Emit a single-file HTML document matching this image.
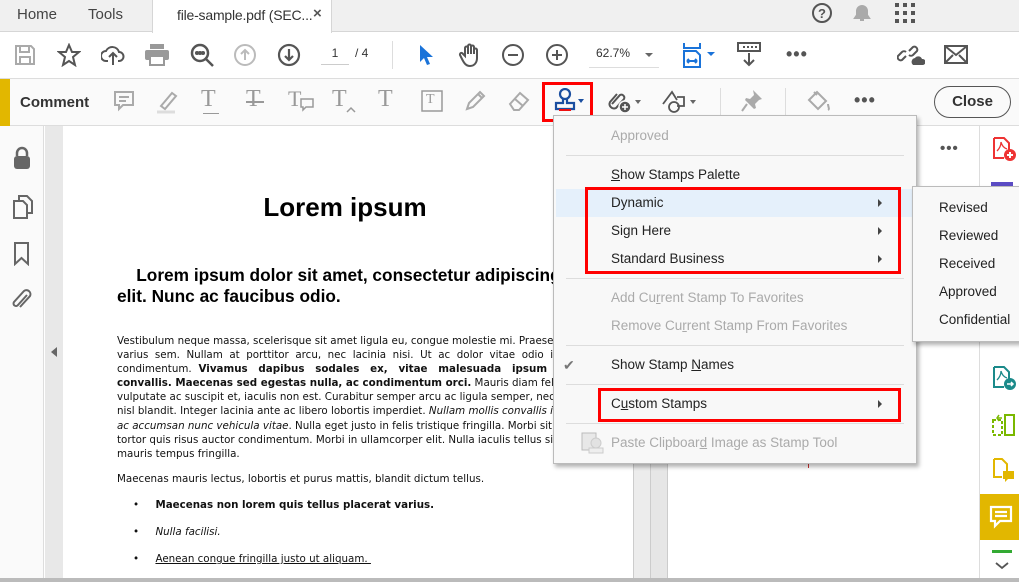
<!DOCTYPE html>
<html><head><meta charset="utf-8"><style>
*{margin:0;padding:0;box-sizing:border-box}
body{width:1019px;height:582px;overflow:hidden;background:#fff;font-family:"Liberation Sans",sans-serif;position:relative}
.a{position:absolute}
svg.i{position:absolute;fill:none;stroke:#555;stroke-width:2}
.mi{position:absolute;left:611px;font-size:13.5px;color:#222;font-family:"Liberation Sans",sans-serif}
.dis{color:#aaa}
.arr{position:absolute;left:878px;width:0;height:0;border-left:4px solid #444;border-top:4px solid transparent;border-bottom:4px solid transparent}
.sep{position:absolute;left:566px;width:338px;height:1px;background:#ddd}
.pt{font-family:"DejaVu Sans",sans-serif;font-size:10.3px;color:#111;line-height:14.1px}
</style></head><body>
<!-- tab bar -->
<div class="a" style="left:0;top:0;width:1019px;height:32px;background:#f0f0f0;border-bottom:1px solid #d6d6d6"></div>
<div class="a" style="left:17px;top:6px;font-size:15px;color:#444">Home</div>
<div class="a" style="left:88px;top:6px;font-size:15px;color:#444">Tools</div>
<div class="a" style="left:152px;top:0;width:180px;height:33px;background:#fff;border-left:1px solid #d6d6d6;border-right:1px solid #d6d6d6"></div>
<div class="a" style="left:177px;top:7px;font-size:14px;color:#333;letter-spacing:-0.2px">file-sample.pdf (SEC...</div>
<div class="a" style="left:313px;top:5px;font-size:15px;color:#555;font-weight:bold">×</div>
<svg class="i" style="left:811px;top:2px" width="22" height="22" viewBox="0 0 22 22"><circle cx="11" cy="11" r="9"/><text x="11" y="16" font-size="13" font-weight="bold" fill="#555" stroke="none" text-anchor="middle" font-family="Liberation Sans">?</text></svg>
<svg class="i" style="left:852px;top:2px" width="20" height="22" viewBox="0 0 20 22"><path d="M3 16h14l-2-3V9a5 5 0 0 0-10 0v4z M8 18h4" fill="#aaa" stroke="#aaa"/></svg>
<svg class="a" style="left:895px;top:3px" width="20" height="20"><g fill="#555"><rect x="0" y="0" width="4" height="4"/><rect x="8" y="0" width="4" height="4"/><rect x="16" y="0" width="4" height="4"/><rect x="0" y="8" width="4" height="4"/><rect x="8" y="8" width="4" height="4"/><rect x="16" y="8" width="4" height="4"/><rect x="0" y="16" width="4" height="4"/><rect x="8" y="16" width="4" height="4"/><rect x="16" y="16" width="4" height="4"/></g></svg>
<!-- toolbar 2 -->
<div class="a" style="left:0;top:78px;width:1019px;height:1px;background:#ddd"></div>
<svg class="i" style="left:14px;top:44px;stroke:#aaa" width="22" height="22"><path d="M2 2h15l3 3v15H2z M6 2v6h9V2 M6 20v-7h10v7"/></svg>
<svg class="i" style="left:57px;top:43px" width="24" height="24"><path d="M12 2l3 7h7l-6 5 2 8-6-4-6 4 2-8-6-5h7z"/></svg>
<svg class="i" style="left:101px;top:43px" width="24" height="24"><path d="M7 18H5a5 5 0 0 1 0-10 7 7 0 0 1 13 1 4.5 4.5 0 0 1 0 9h-1 M12 22V11 M8 14l4-4 4 4"/></svg>
<svg class="a" style="left:145px;top:44px" width="24" height="22"><rect x="5" y="0" width="14" height="5" fill="#999"/><rect x="0" y="6" width="24" height="10" rx="2" fill="#999"/><rect x="5" y="12" width="14" height="9" fill="#fff" stroke="#999" stroke-width="2"/></svg>
<svg class="i" style="left:190px;top:43px;stroke-width:2.5" width="26" height="26"><circle cx="10" cy="10" r="8"/><path d="M16 16l7 7"/><circle cx="7" cy="10" r=".8" fill="#555"/><circle cx="10" cy="10" r=".8" fill="#555"/><circle cx="13" cy="10" r=".8" fill="#555"/></svg>
<svg class="i" style="left:233px;top:43px;stroke:#bbb" width="24" height="24"><circle cx="12" cy="12" r="10"/><path d="M12 17V7 M8 11l4-4 4 4"/></svg>
<svg class="i" style="left:277px;top:43px;stroke-width:2.2" width="24" height="24"><circle cx="12" cy="12" r="10"/><path d="M12 6v11 M8 13l4 4 4-4"/></svg>
<div class="a" style="left:321px;top:46px;font-size:12px;color:#333;width:28px;text-align:center;border-bottom:1px solid #ccc;padding-bottom:4px">1</div>
<div class="a" style="left:355px;top:46px;font-size:12px;color:#333">/ 4</div>
<div class="a" style="left:392px;top:41px;width:1px;height:28px;background:#ddd"></div>
<svg class="a" style="left:418px;top:44px" width="16" height="22"><path d="M2 1v17l4-4 3 7 3-1-3-7h6z" fill="#1a73d9"/></svg>
<svg class="i" style="left:458px;top:42px" width="26" height="26"><path d="M7 14V6a1.5 1.5 0 0 1 3 0v6V4a1.5 1.5 0 0 1 3 0v8V5a1.5 1.5 0 0 1 3 0v7V8a1.5 1.5 0 0 1 3 0v8c0 5-3 8-7 8s-6-3-8-7l-2-4a1.5 1.5 0 0 1 3-1z"/></svg>
<svg class="i" style="left:501px;top:43px" width="24" height="24"><circle cx="12" cy="12" r="10"/><path d="M7 12h10"/></svg>
<svg class="i" style="left:545px;top:43px" width="24" height="24"><circle cx="12" cy="12" r="10"/><path d="M7 12h10 M12 7v10"/></svg>
<div class="a" style="left:589px;top:46px;width:70px;border-bottom:1px solid #ddd;height:22px;font-size:12px;color:#333;padding-left:7px">62.7%</div>
<div class="a" style="left:645px;top:53px;border-top:4px solid #666;border-left:4px solid transparent;border-right:4px solid transparent"></div>
<svg class="i" style="left:682px;top:42px;stroke:#1a73d9" width="22" height="26"><path d="M2 1v5h16V1 M2 25V9h12l4 4v12z M5 19h10 M5 19l2-2 M5 19l2 2 M15 19l-2-2 M15 19l-2 2"/></svg>
<div class="a" style="left:707px;top:52px;border-top:4px solid #1a73d9;border-left:4px solid transparent;border-right:4px solid transparent"></div>
<svg class="a" style="left:737px;top:42px" width="24" height="26"><rect x="1" y="1" width="22" height="8" fill="none" stroke="#555" stroke-width="2"/><g fill="#555"><rect x="6" y="4" width="2" height="2"/><rect x="10" y="4" width="2" height="2"/><rect x="14" y="4" width="2" height="2"/><rect x="18" y="4" width="2" height="2"/></g><path d="M12 11v12 M7 18l5 5 5-5" stroke="#555" stroke-width="2" fill="none"/></svg>
<div class="a" style="left:786px;top:44px;font-size:18px;color:#555;letter-spacing:1px;font-weight:bold">•••</div>
<svg class="i" style="left:897px;top:43px" width="28" height="24"><path d="M9 13l-4 4a3 3 0 0 1-4-4l4-4a3 3 0 0 1 4 0 M12 8l4-4a3 3 0 0 1 4 4l-4 4a3 3 0 0 1-4 0"/><path d="M16 22a4 4 0 0 1 2-7 4 4 0 0 1 7 1 3 3 0 0 1 1 6z" fill="#555" stroke="none"/></svg>
<svg class="i" style="left:944px;top:45px" width="24" height="20"><rect x="1" y="1" width="22" height="17"/><path d="M1 1l11 9 11-9 M1 18l8-8 M23 18l-8-8"/></svg>
<!-- comment bar -->
<div class="a" style="left:0;top:79px;width:1019px;height:47px;background:#fafafa;border-bottom:1px solid #ddd"></div>
<div class="a" style="left:0;top:79px;width:10px;height:47px;background:#e2b700"></div>
<div class="a" style="left:20px;top:94px;font-size:15px;font-weight:bold;color:#333">Comment</div>
<svg class="i" style="left:114px;top:91px;stroke:#aaa" width="20" height="22"><path d="M1 1h18v13H9l-4 4v-4H1z M5 6h10 M5 10h7"/></svg>
<svg class="i" style="left:157px;top:90px;stroke:#aaa" width="22" height="24"><path d="M4 16L15 3l4 3L8 19z"/><path d="M0 22h18" stroke="#ddd" stroke-width="3"/></svg>
<div class="a" style="left:201px;top:86px;font-family:'Liberation Serif',serif;font-size:24px;color:#999">T</div><div class="a" style="left:203px;top:113px;width:16px;height:1px;background:#999"></div>
<div class="a" style="left:246px;top:86px;font-family:'Liberation Serif',serif;font-size:24px;color:#999">T</div><div class="a" style="left:246px;top:101px;width:18px;height:1.5px;background:#999"></div>
<div class="a" style="left:288px;top:86px;font-family:'Liberation Serif',serif;font-size:22px;color:#999">T</div><svg class="i" style="left:300px;top:98px;stroke:#999;stroke-width:1.5" width="14" height="14"><path d="M1 1h12v8H6l-3 3V9H1z"/></svg>
<div class="a" style="left:332px;top:86px;font-family:'Liberation Serif',serif;font-size:24px;color:#999">T</div><svg class="i" style="left:345px;top:104px;stroke:#999;stroke-width:1.5" width="12" height="10"><path d="M2 8l4-4 4 4"/></svg>
<div class="a" style="left:378px;top:86px;font-family:'Liberation Serif',serif;font-size:24px;color:#999">T</div>
<svg class="i" style="left:421px;top:90px;stroke:#999;stroke-width:1.5" width="22" height="22"><rect x="1" y="1" width="20" height="20"/></svg><div class="a" style="left:426px;top:92px;font-family:'Liberation Serif',serif;font-size:14px;color:#999">T</div>
<svg class="i" style="left:464px;top:90px;stroke:#aaa" width="22" height="22"><path d="M3 19l2-6L16 2l4 4L9 17z M14 4l4 4"/></svg>
<svg class="i" style="left:507px;top:90px;stroke:#aaa" width="26" height="22"><path d="M3 14l10-11 8 7-9 10H7z M8 9l8 7"/></svg>
<svg class="a" style="left:553px;top:88px" width="24" height="26"><circle cx="12" cy="6" r="5" fill="none" stroke="#1b4fa0" stroke-width="2.2"/><path d="M10 11v4H3v6h18v-6h-7v-4" fill="none" stroke="#1b4fa0" stroke-width="2.2"/><rect x="6" y="21" width="12" height="2" fill="#e11"/></svg>
<div class="a" style="left:578px;top:99px;border-top:4px solid #1b4fa0;border-left:3.5px solid transparent;border-right:3.5px solid transparent"></div>
<div class="a" style="left:542px;top:82px;width:51px;height:40px;border:3px solid #f00"></div>
<svg class="i" style="left:607px;top:88px" width="26" height="26"><path d="M5 16l8-9a3 3 0 0 1 4 4l-8 9a4.5 4.5 0 0 1-6-6l7-8"/><circle cx="18" cy="19" r="6" fill="#555" stroke="#fafafa" stroke-width="1.5"/><path d="M18 16v6 M15 19h6" stroke="#fff" stroke-width="1.5"/></svg>
<div class="a" style="left:635px;top:100px;border-top:4px solid #666;border-left:3.5px solid transparent;border-right:3.5px solid transparent"></div>
<svg class="i" style="left:662px;top:88px;stroke-width:1.8" width="28" height="26"><path d="M1 16L10 4l5 8 M15 9h7v9h-7"/><circle cx="12" cy="19" r="5"/></svg>
<div class="a" style="left:690px;top:100px;border-top:4px solid #666;border-left:3.5px solid transparent;border-right:3.5px solid transparent"></div>
<div class="a" style="left:720px;top:88px;width:1px;height:28px;background:#ddd"></div>
<svg class="a" style="left:741px;top:89px" width="22" height="24"><path d="M12 1l9 9-3 1-4 4 1 4-2 1-9-9 1-2 4 1 4-4z" fill="#aaa"/><path d="M6 15l-5 7" stroke="#aaa" stroke-width="2"/></svg>
<div class="a" style="left:785px;top:88px;width:1px;height:28px;background:#ddd"></div>
<svg class="i" style="left:805px;top:88px;stroke:#aaa" width="26" height="26"><path d="M4 12l8-8 9 9-8 8z M9 4l3 3"/><path d="M23 16c0 3 2 5 0 6" stroke="#aaa"/></svg>
<div class="a" style="left:854px;top:90px;font-size:18px;color:#555;letter-spacing:1px;font-weight:bold">•••</div>
<div class="a" style="left:934px;top:86px;width:77px;height:32px;border:1.5px solid #555;border-radius:16px;text-align:center;font-size:15px;font-weight:bold;color:#333;line-height:29px">Close</div>
<!-- left sidebar -->
<div class="a" style="left:0;top:126px;width:44px;height:456px;background:#fafafa;border-right:1px solid #ddd"></div>
<svg class="a" style="left:13px;top:146px" width="18" height="24"><path d="M4 10V7a5 5 0 0 1 10 0v3" fill="none" stroke="#666" stroke-width="2.5"/><rect x="1" y="10" width="16" height="13" rx="3" fill="#666"/></svg>
<svg class="i" style="left:13px;top:195px;stroke:#666" width="20" height="24"><path d="M6 6V1h8l5 5v12h-5 M1 6h9l4 4v13H1z"/></svg>
<svg class="i" style="left:14px;top:242px;stroke:#666" width="16" height="24"><path d="M1 1h13v21l-6.5-6-6.5 6z"/></svg>
<svg class="i" style="left:11px;top:287px;stroke:#666" width="22" height="24"><path d="M16 8l-9 10a2.5 2.5 0 0 1-4-3l10-11a4 4 0 0 1 6 5l-10 11"/></svg>
<div class="a" style="left:45px;top:126px;width:18px;height:456px;background:#e8e8e8"></div>
<div class="a" style="left:51px;top:347px;border-right:6px solid #666;border-top:5px solid transparent;border-bottom:5px solid transparent"></div>
<div class="a" style="left:0;top:578px;width:1019px;height:4px;background:#bbb"></div>
<!-- page -->
<div class="a" style="left:63px;top:126px;width:570px;height:452px;background:#fff;overflow:hidden">
 <div class="a" style="left:0;top:66px;width:564px;text-align:center;font-weight:bold;font-size:26px;color:#000">Lorem ipsum</div>
 <div class="a" style="left:54px;top:139px;width:520px;font-weight:bold;font-size:17.3px;line-height:21px;color:#000;white-space:nowrap">&nbsp;&nbsp;&nbsp;&nbsp;Lorem ipsum dolor sit amet, consectetur adipiscing<br>elit. Nunc ac faucibus odio.</div>
 <div class="a pt" style="left:54px;top:208px;width:560px;white-space:nowrap">
 Vestibulum neque massa, scelerisque sit amet ligula eu, congue molestie mi. Praesent<br>
 varius&nbsp; sem.&nbsp; Nullam&nbsp; at&nbsp; porttitor&nbsp; arcu,&nbsp; nec&nbsp; lacinia&nbsp; nisi.&nbsp; Ut&nbsp; ac&nbsp; dolor&nbsp; vitae&nbsp; odio&nbsp; interdum<br>
 condimentum. <b>&nbsp;Vivamus&nbsp;&nbsp; dapibus&nbsp;&nbsp; sodales&nbsp;&nbsp; ex,&nbsp;&nbsp; vitae&nbsp;&nbsp; malesuada&nbsp;&nbsp; ipsum&nbsp;&nbsp; cursus</b><br>
 <b>convallis. Maecenas sed egestas nulla, ac condimentum orci.</b> Mauris diam felis,<br>
 vulputate ac suscipit et, iaculis non est. Curabitur semper arcu ac ligula semper, nec luctus<br>
 nisl blandit. Integer lacinia ante ac libero lobortis imperdiet. <i>Nullam mollis convallis ipsum,</i><br>
 <i>ac accumsan nunc vehicula vitae</i>. Nulla eget justo in felis tristique fringilla. Morbi sit amet<br>
 tortor quis risus auctor condimentum. Morbi in ullamcorper elit. Nulla iaculis tellus sit amet<br>
 mauris tempus fringilla.</div>
 <div class="a pt" style="left:54px;top:346px;white-space:nowrap">Maecenas mauris lectus, lobortis et purus mattis, blandit dictum tellus.</div>
 <div class="a pt" style="left:70px;top:372px;white-space:nowrap">•&nbsp;&nbsp;&nbsp;&nbsp;&nbsp;<b>Maecenas non lorem quis tellus placerat varius.</b></div>
 <div class="a pt" style="left:70px;top:399px;white-space:nowrap">•&nbsp;&nbsp;&nbsp;&nbsp;&nbsp;<i>Nulla facilisi.</i></div>
 <div class="a pt" style="left:70px;top:426px;white-space:nowrap">•&nbsp;&nbsp;&nbsp;&nbsp;&nbsp;<u>Aenean congue fringilla justo ut aliquam.&nbsp;</u></div>
</div>
<div class="a" style="left:633px;top:126px;width:17px;height:452px;background:#ececec;border-left:1px solid #ccc"></div>
<div class="a" style="left:650px;top:126px;width:18px;height:452px;background:#e6e6e6;border-left:1px solid #ccc;border-right:1px solid #ccc"></div>
<!-- right panel -->
<div class="a" style="left:940px;top:140px;font-size:15px;color:#555;font-weight:bold;letter-spacing:1px">•••</div>
<div class="a" style="left:808px;top:458px;width:1px;height:10px;background:#c33"></div>
<div class="a" style="left:979px;top:126px;width:1px;height:452px;background:#ddd"></div>
<svg class="a" style="left:992px;top:137px" width="26" height="26"><path d="M2 1h10l5 5v9 M2 1v20h10" fill="none" stroke="#e33" stroke-width="2"/><path d="M5 14c3-3 4-6 4-9 1 4 3 6 6 7" fill="none" stroke="#e33" stroke-width="1.3"/><circle cx="18" cy="18" r="6" fill="#e33"/><path d="M18 15v6 M15 18h6" stroke="#fff" stroke-width="2"/></svg>
<div class="a" style="left:991px;top:182px;width:22px;height:4px;background:#5b4cc4"></div>
<div class="a" style="left:991px;top:337px;width:22px;height:4px;background:#5b4cc4"></div>
<svg class="a" style="left:992px;top:366px" width="26" height="26"><path d="M2 1h10l5 5v9 M2 1v20h10" fill="none" stroke="#1b8a8a" stroke-width="2"/><path d="M5 14c3-3 4-6 4-9 1 4 3 6 6 7" fill="none" stroke="#1b8a8a" stroke-width="1.3"/><circle cx="18" cy="18" r="6" fill="#1b8a8a"/><path d="M15 18h6 M19 16l2 2-2 2" stroke="#fff" stroke-width="1.5" fill="none"/></svg>
<svg class="a" style="left:992px;top:414px" width="24" height="22"><rect x="1" y="6" width="9" height="15" fill="none" stroke="#7ab800" stroke-width="2" stroke-dasharray="3 2"/><rect x="13" y="1" width="9" height="20" fill="none" stroke="#7ab800" stroke-width="2"/><path d="M10 4l-4 0 M7 1l-2 3 2 3" stroke="#7ab800" stroke-width="1.5" fill="none"/></svg>
<svg class="a" style="left:992px;top:458px" width="24" height="26"><path d="M2 1h8l5 5v8 M2 1v18h8" fill="none" stroke="#e2b700" stroke-width="2"/><path d="M11 13h11v8h-6l-3 3v-3h-2z" fill="#e2b700"/></svg>
<div class="a" style="left:980px;top:494px;width:39px;height:46px;background:#e2b700"></div>
<svg class="a" style="left:989px;top:505px" width="24" height="24"><path d="M2 2h20v14h-11l-5 5v-5H2z M6 7h12 M6 11h12" fill="none" stroke="#fff" stroke-width="2.2"/></svg>
<div class="a" style="left:992px;top:550px;width:20px;height:3px;background:#3a3;"></div>
<svg class="i" style="left:995px;top:561px;stroke-width:1.8" width="14" height="10"><path d="M1 2l6 5 6-5"/></svg>
<!-- menu -->
<div class="a" style="left:553px;top:115px;width:364px;height:349px;background:#f8f8f8;border:1px solid #bbb;box-shadow:2px 3px 4px rgba(0,0,0,.3)"></div>
<div class="a" style="left:556px;top:189px;width:358px;height:28px;background:#e5f0fb"></div>
<div class="mi dis" style="top:128px">Approved</div>
<div class="sep" style="top:155px"></div>
<div class="mi" style="top:167px"><u>S</u>how Stamps Palette</div>
<div class="mi" style="top:195px">Dynamic</div><div class="arr" style="top:199px"></div>
<div class="mi" style="top:223px">Sign Here</div><div class="arr" style="top:227px"></div>
<div class="mi" style="top:251px">Standard Business</div><div class="arr" style="top:255px"></div>
<div class="sep" style="top:278px"></div>
<div class="mi dis" style="top:290px">Add Cu<u>r</u>rent Stamp To Favorites</div>
<div class="mi dis" style="top:318px">Remove Cu<u>r</u>rent Stamp From Favorites</div>
<div class="sep" style="top:345px"></div>
<div class="a" style="left:563px;top:357px;font-size:14px;color:#777">✔</div>
<div class="mi" style="top:357px">Show Stamp <u>N</u>ames</div>
<div class="sep" style="top:384px"></div>
<div class="mi" style="top:396px">C<u>u</u>stom Stamps</div><div class="arr" style="top:400px"></div>
<div class="sep" style="top:423px"></div>
<svg class="a" style="left:581px;top:431px" width="24" height="24"><rect x="1" y="2" width="14" height="17" fill="#e8e8e8" stroke="#bbb"/><circle cx="15" cy="12" r="5" fill="#e2e2e2" stroke="#ccc"/><rect x="8" y="17" width="14" height="5" fill="#eee" stroke="#ccc"/></svg>
<div class="mi dis" style="top:435px">Paste Clipboar<u>d</u> Image as Stamp Tool</div>
<div class="a" style="left:585px;top:187px;width:316px;height:87px;border:3px solid #f00"></div>
<div class="a" style="left:598px;top:388px;width:303px;height:34px;border:3px solid #f00"></div>
<!-- submenu -->
<div class="a" style="left:912px;top:186px;width:112px;height:156px;background:#f8f8f8;border:1px solid #bbb;box-shadow:2px 3px 4px rgba(0,0,0,.3)"></div>
<div class="mi" style="left:939px;top:200px">Revised</div>
<div class="mi" style="left:939px;top:228px">Reviewed</div>
<div class="mi" style="left:939px;top:256px">Received</div>
<div class="mi" style="left:939px;top:284px">Approved</div>
<div class="mi" style="left:939px;top:312px">Confidential</div>
</body></html>
